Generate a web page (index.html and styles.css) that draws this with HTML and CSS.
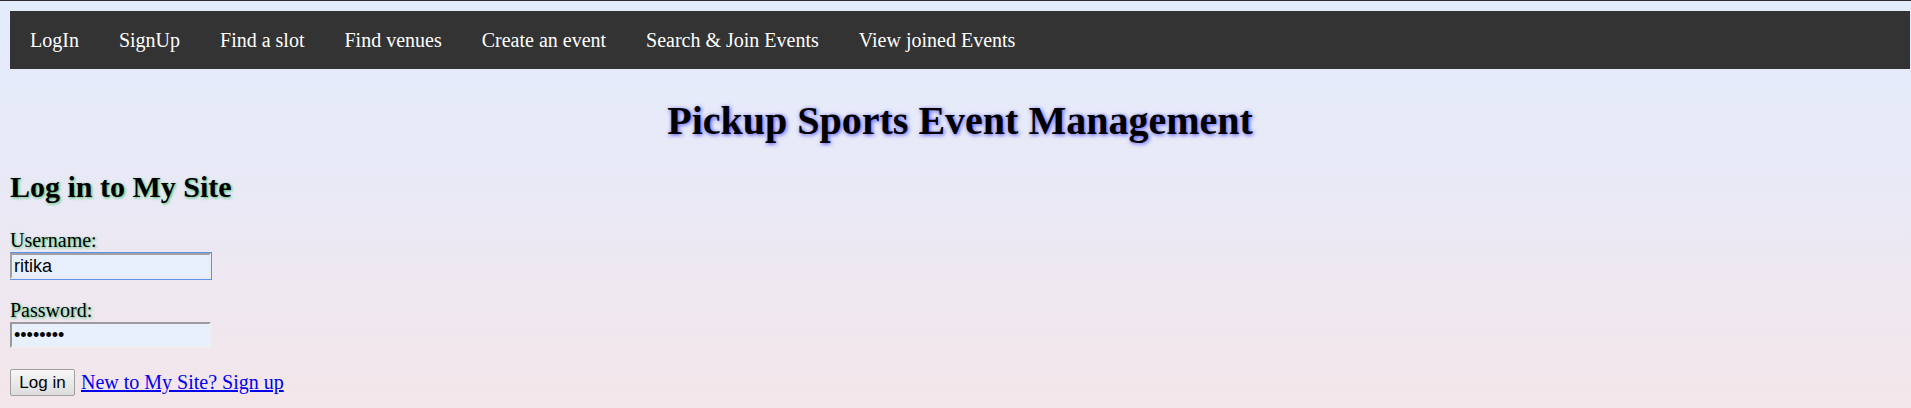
FILE: index.html
```
<!DOCTYPE html>
<html lang="en">
<head>
<meta charset="utf-8">
<title>Pickup Sports Event Management</title>
<link rel="stylesheet" href="styles.css">
</head>
<body>
<nav class="topnav">
  <ul class="nav-list">
    <li><a class="nav-link" href="#">LogIn</a></li>
    <li><a class="nav-link" href="#">SignUp</a></li>
    <li><a class="nav-link" href="#">Find a slot</a></li>
    <li><a class="nav-link" href="#">Find venues</a></li>
    <li><a class="nav-link" href="#">Create an event</a></li>
    <li><a class="nav-link" href="#">Search &amp; Join Events</a></li>
    <li><a class="nav-link" href="#">View joined Events</a></li>
  </ul>
</nav>
<h1 class="site-title">Pickup Sports Event Management</h1>
<h2 class="login-title">Log in to My Site</h2>
<form class="login-form" action="#">
  <div class="field">
    <label class="field-label" for="username">Username:</label>
    <input class="field-input field-input--focus" id="username" type="text" value="ritika">
  </div>
  <div class="field">
    <label class="field-label" for="password">Password:</label>
    <input class="field-input" id="password" type="password" value="password">
  </div>
  <div class="actions">
    <button class="submit-btn" type="button">Log in</button>
    <a class="signup-link" href="#">New to My Site? Sign up</a>
  </div>
</form>
</body>
</html>
```
FILE: styles.css
```
html {
  border-top: 1px solid #2c2c2c;
  min-height: 100%;
  background: linear-gradient(to bottom, #e3ecfd 0%, #e9e9f6 45%, #f4e6ea 100%);
}
body {
  margin: 10px 1px 0 10px;
  font-family: "Liberation Serif", "Times New Roman", serif;
  font-size: 20px;
  color: #000;
}
.topnav {
  background: #333333;
}
.nav-list {
  list-style: none;
  margin: 0;
  padding: 0;
  display: flex;
}
.nav-link {
  display: block;
  padding: 17.5px 20px;
  line-height: 23px;
  color: #ffffff;
  text-decoration: none;
  font-size: 20px;
}
.site-title {
  margin: 29px 0 25px;
  text-align: center;
  font-size: 40px;
  line-height: 46px;
  font-weight: bold;
  text-shadow: 1px 1px 4px #4a4aff;
}
.login-title {
  margin: 0 0 25px;
  font-size: 30px;
  line-height: 35px;
  font-weight: bold;
  text-shadow: 1px 1px 3px #3fbf6f;
}
.login-form {
  display: flex;
  flex-direction: column;
  gap: 20px;
  align-items: flex-start;
}
.field {
  display: flex;
  flex-direction: column;
  align-items: flex-start;
}
.field-label {
  line-height: 23px;
  text-shadow: 1px 1px 3px #3fbf6f;
}
.field-input {
  box-sizing: border-box;
  width: 201px;
  height: 26px;
  margin: 0;
  padding: 1px 2px;
  border-style: solid;
  border-width: 2px;
  border-color: #9b9b9b #f0f0f0 #f0f0f0 #9b9b9b;
  background: #e8f0fe;
  font-family: "Liberation Sans", Arial, sans-serif;
  font-size: 18px;
  color: #000;
}
.field-input--focus {
  outline: 1px solid #5e92ee;
  outline-offset: 0;
  margin-top: 1px;
  border-color: #a0a0a0 #e8ecf4 #e8ecf4 #a0a0a0;
}
.actions {
  display: flex;
  align-items: center;
  gap: 6px;
  margin-top: 1px;
}
.submit-btn {
  box-sizing: border-box;
  height: 27px;
  width: 65px;
  padding: 0 6px;
  font-family: "Liberation Sans", Arial, sans-serif;
  font-size: 17px;
  color: #000;
  background: linear-gradient(#f6f6f6, #dddddd);
  border: 1px solid #a0a0a0;
  border-radius: 2px;
}
.signup-link {
  color: #0000ee;
  text-decoration: underline;
  font-size: 20px;
  line-height: 23px;
}
```
